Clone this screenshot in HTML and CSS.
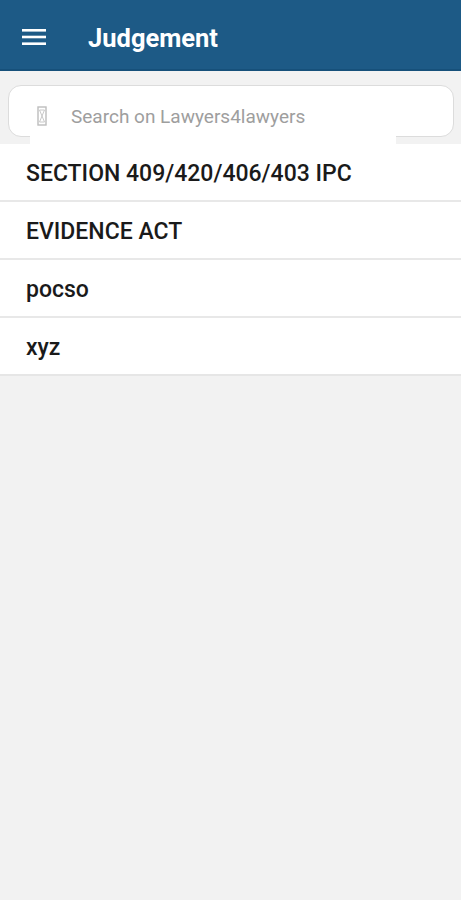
FILE: index.html
```html
<!DOCTYPE html>
<html>
<head>
<meta charset="utf-8">
<link rel="stylesheet" href="styles.css">
</head>
<body>
<header class="appbar">
  <svg class="menu" width="24" height="18" viewBox="0 0 24 18"><rect x="0" y="1" width="24" height="2.6" fill="#fff"/><rect x="0" y="7.7" width="24" height="2.6" fill="#fff"/><rect x="0" y="14.4" width="24" height="2.6" fill="#fff"/></svg>
  <h1 class="title">Judgement</h1>
</header>
<div class="search-wrap">
  <div class="search">
    <svg class="tofu" width="10" height="20" viewBox="0 0 10 20"><rect x="1" y="1" width="8" height="18" fill="none" stroke="#bdbdbd" stroke-width="1.4"/><path d="M2.5 4 L7.5 4 L5 10 L7.5 16 L2.5 16 L5 10 Z" fill="none" stroke="#c8c8c8" stroke-width="1"/></svg>
    <span class="placeholder">Search on Lawyers4lawyers</span>
  </div>
</div>
<ul class="list">
  <li class="item">SECTION 409/420/406/403 IPC</li>
  <li class="item">EVIDENCE ACT</li>
  <li class="item">pocso</li>
  <li class="item">xyz</li>
</ul>
</body>
</html>
```
FILE: styles.css
```css
html, body {
  margin: 0;
  padding: 0;
  background: #f2f2f2;
  font-family: Roboto, "Liberation Sans", sans-serif;
}
.appbar {
  height: 69px;
  background: #1d5a86;
  border-bottom: 2px solid #16507a;
  display: flex;
  align-items: center;
  padding-left: 22px;
  box-sizing: content-box;
}
.menu {
  display: block;
  margin-top: 4px;
}
.title {
  margin: 0 0 0 42px;
  color: #fff;
  font-size: 25.5px;
  font-weight: 700;
  margin-top: 6px;
}
.search-wrap {
  padding: 14px 7px 0 8px;
  position: relative;
}
.search {
  height: 50px;
  background: #fff;
  border: 1.5px solid #dcdcdc;
  border-radius: 13px;
  display: flex;
  align-items: center;
  padding-left: 28px;
  box-sizing: content-box;
}
.tofu {
  display: block;
  margin-top: 10px;
}
.placeholder {
  margin-left: 24px;
  color: #9e9e9e;
  font-size: 19px;
  margin-top: 10px;
}
.list {
  list-style: none;
  margin: 7px 0 0 0;
  padding: 0;
  background: #fff;
  position: relative;
  border-bottom: 2px solid #e6e6e6;
}
.list::before {
  content: "";
  position: absolute;
  left: 30px;
  width: 366px;
  top: -9px;
  height: 9px;
  background: #fff;
}
.item {
  height: 56px;
  display: flex;
  align-items: center;
  padding: 3px 0 0 26px;
  box-sizing: border-box;
  font-size: 23px;
  font-weight: 500;
  color: #1a1a1a;
  border-bottom: 2px solid #e8e8e8;
  height: 58px;
}
.item:last-child {
  border-bottom: none;
  height: 56px;
}
```
